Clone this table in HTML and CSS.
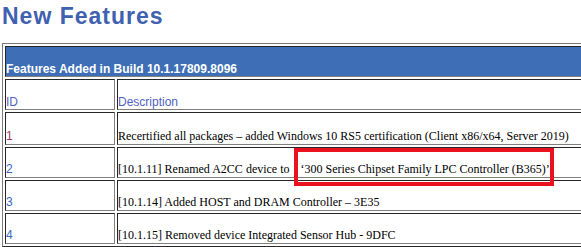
FILE: index.html
```html
<!DOCTYPE html>
<html lang="en">
<head>
  <meta charset="UTF-8">
  <title>New Features</title>
  <link rel="stylesheet" href="styles.css">
</head>
<body>

  <h1 class="page-title">New Features</h1>

  <table class="features">
    <tr class="build-row">
      <td colspan="2">Features Added in Build 10.1.17809.8096</td>
    </tr>
    <tr class="head-row">
      <td class="col-id">ID</td>
      <td>Description</td>
    </tr>
    <tr class="row-tall">
      <td class="col-id"><a class="visited" href="#">1</a></td>
      <td>Recertified all packages – added Windows 10 RS5 certification (Client x86/x64, Server 2019)</td>
    </tr>
    <tr>
      <td class="col-id"><a href="#">2</a></td>
      <td>[10.1.11] Renamed A2CC device to <span class="callout">‘300 Series Chipset Family LPC Controller (B365)’</span></td>
    </tr>
    <tr>
      <td class="col-id"><a href="#">3</a></td>
      <td>[10.1.14] Added HOST and DRAM Controller – 3E35</td>
    </tr>
    <tr>
      <td class="col-id"><a href="#">4</a></td>
      <td>[10.1.15] Removed device Integrated Sensor Hub - 9DFC</td>
    </tr>
  </table>

</body>
</html>
```

FILE: styles.css
```css
body {
  margin: 0;
  padding: 0 0 0 2px;
  background: #fff;
  font-family: "Liberation Serif", "Times New Roman", serif;
  font-size: 12px;
  color: #000;
  overflow: hidden;
}

.page-title {
  font-family: "Liberation Sans", Arial, sans-serif;
  font-size: 23px;
  font-weight: bold;
  letter-spacing: 1px;
  line-height: 22px;
  color: #4060b0;
  margin: 0 0 16px 0;
  padding: 5px 0 0 0;
}

.features {
  width: 820px;
  border-collapse: separate;
  border-spacing: 2px;
  border: 1px solid;
  border-color: #7c7c7c #2a2a2a #2a2a2a #7c7c7c;
}

.features tr {
  height: 31px;
}

.features tr.row-tall {
  height: 33px;
}

.features td {
  padding: 0 0 1px 0;
  vertical-align: bottom;
  border: 1px solid;
  border-color: #262626 #808080 #808080 #262626;
  line-height: 14px;
}

.features .col-id {
  width: 108px;
  font-family: "Liberation Sans", Arial, sans-serif;
}

.build-row td {
  background: #3e6fb6;
  color: #fff;
  font-family: "Liberation Sans", Arial, sans-serif;
  font-weight: bold;
  padding-bottom: 0;
}

.head-row td {
  font-family: "Liberation Sans", Arial, sans-serif;
  color: #5062c4;
  padding-bottom: 0;
}

.features a {
  color: #3868c4;
  text-decoration: none;
}

.features a.visited {
  color: #a3386a;
}

/* red highlight drawn around the renamed device */
.callout {
  position: relative;
  margin-left: 8px;
}

.callout::after {
  content: "";
  position: absolute;
  left: -7px;
  right: -4px;
  top: -14px;
  bottom: -10px;
  border: 4px solid #e9121e;
}
```
